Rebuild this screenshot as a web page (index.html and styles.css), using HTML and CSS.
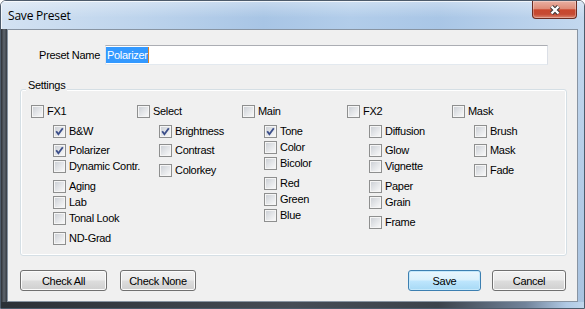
FILE: index.html
```html
<!doctype html>
<html lang="en">
<head>
	<title>Save Preset</title>
	<meta charset="UTF-8">
	<link rel="stylesheet" href="styles.css">
</head>
<body>

<div class="window">

	<div class="titlebar">
		<span class="title">Save Preset</span>
		<span class="close">
			<svg width="14" height="12" viewBox="0 0 14 12">
				<path d="M3.5 2.5 L10.5 9.5 M10.5 2.5 L3.5 9.5" stroke="#3b3b3b" stroke-width="4.4" fill="none"/>
				<path d="M3.5 2.5 L10.5 9.5 M10.5 2.5 L3.5 9.5" stroke="#ffffff" stroke-width="2.4" fill="none"/>
			</svg>
		</span>
	</div>

	<div class="frame-mid">
		<div class="frame-left"></div>

		<div class="client">

			<div class="name-row">
				<label class="name-label">Preset Name</label>
				<div class="textbox"><span class="sel">Polarizer</span><span class="caret"></span></div>
			</div>

			<div class="group">
				<div class="group-title">Settings</div>

				<div class="cols">

					<!-- FX1 -->
					<div class="col">
						<div class="cb-row"><span class="cb"></span>FX1</div>
						<div class="sub">
							<div class="cb-row"><span class="cb"><svg viewBox="0 0 11 11"><path d="M2.2 5.2 L4.4 8.2 L8.8 2.2" class="tick"/></svg></span>B&amp;W</div>
							<div class="cb-row gap3"><span class="cb"><svg viewBox="0 0 11 11"><path d="M2.2 5.2 L4.4 8.2 L8.8 2.2" class="tick"/></svg></span>Polarizer</div>
							<div class="cb-row"><span class="cb"></span>Dynamic Contr.</div>
							<div class="cb-row gap4"><span class="cb"></span>Aging</div>
							<div class="cb-row"><span class="cb"></span>Lab</div>
							<div class="cb-row"><span class="cb"></span>Tonal Look</div>
							<div class="cb-row gap4"><span class="cb"></span>ND-Grad</div>
						</div>
					</div>

					<!-- Select -->
					<div class="col">
						<div class="cb-row"><span class="cb"></span>Select</div>
						<div class="sub">
							<div class="cb-row"><span class="cb"><svg viewBox="0 0 11 11"><path d="M2.2 5.2 L4.4 8.2 L8.8 2.2" class="tick"/></svg></span>Brightness</div>
							<div class="cb-row gap3"><span class="cb"></span>Contrast</div>
							<div class="cb-row gap4"><span class="cb"></span>Colorkey</div>
						</div>
					</div>

					<!-- Main -->
					<div class="col">
						<div class="cb-row"><span class="cb"></span>Main</div>
						<div class="sub">
							<div class="cb-row"><span class="cb"><svg viewBox="0 0 11 11"><path d="M2.2 5.2 L4.4 8.2 L8.8 2.2" class="tick"/></svg></span>Tone</div>
							<div class="cb-row"><span class="cb"></span>Color</div>
							<div class="cb-row"><span class="cb"></span>Bicolor</div>
							<div class="cb-row gap4"><span class="cb"></span>Red</div>
							<div class="cb-row"><span class="cb"></span>Green</div>
							<div class="cb-row"><span class="cb"></span>Blue</div>
						</div>
					</div>

					<!-- FX2 -->
					<div class="col">
						<div class="cb-row"><span class="cb"></span>FX2</div>
						<div class="sub">
							<div class="cb-row"><span class="cb"></span>Diffusion</div>
							<div class="cb-row gap3"><span class="cb"></span>Glow</div>
							<div class="cb-row"><span class="cb"></span>Vignette</div>
							<div class="cb-row gap4"><span class="cb"></span>Paper</div>
							<div class="cb-row"><span class="cb"></span>Grain</div>
							<div class="cb-row gap4"><span class="cb"></span>Frame</div>
						</div>
					</div>

					<!-- Mask -->
					<div class="col">
						<div class="cb-row"><span class="cb"></span>Mask</div>
						<div class="sub">
							<div class="cb-row"><span class="cb"></span>Brush</div>
							<div class="cb-row gap3"><span class="cb"></span>Mask</div>
							<div class="cb-row gap4"><span class="cb"></span>Fade</div>
						</div>
					</div>

				</div>
			</div>

			<div class="buttons">
				<span class="btn btn-all">Check All</span>
				<span class="btn btn-none">Check None</span>
				<span class="spacer"></span>
				<span class="btn btn-default">Save</span>
				<span class="btn btn-cancel">Cancel</span>
			</div>

		</div>

		<div class="frame-right"></div>
	</div>

	<div class="frame-bottom"></div>

</div>

</body>
</html>
```

FILE: styles.css
```css
body { margin: 0; background: #ffffff; }

.window { width: 585px; height: 309px; box-sizing: border-box; display: flex; flex-direction: column;
	border: 1px solid #4d5b6b; border-radius: 6px 6px 0 0; overflow: hidden;
	font-family: "Liberation Sans", Arial, sans-serif; font-size: 11px; letter-spacing: -0.3px; color: #000000; }

/* title bar */
.titlebar { height: 28px; flex: none; display: flex; align-items: center;
	background: linear-gradient(to bottom, rgba(255,255,255,0.35), rgba(255,255,255,0) 60%),
		linear-gradient(to right, #d3e2f2 0%, #bcd3ec 25%, #a8c5e5 45%, #b2cdea 60%, #a9c6e6 75%, #c3d8ef 100%);
	box-shadow: inset 1px 1px 0 rgba(255,255,255,0.7); }
.title { flex: 1; padding-left: 7px; font-family: "Open Sans", "Noto Sans", sans-serif; font-size: 12px; letter-spacing: -0.2px; color: #000000; margin-top: 1px; }
.close { align-self: flex-start; width: 45px; height: 18px; box-sizing: border-box; margin-right: 7px;
	display: flex; align-items: center; justify-content: center;
	border: 1px solid #6b2c22; border-top: none; border-radius: 0 0 4px 4px;
	background: linear-gradient(to bottom, #e9b0a2 0%, #de8c78 45%, #c9472e 52%, #c54a33 78%, #dc8670 100%);
	box-shadow: inset 0 0 0 1px rgba(255,255,255,0.3); }
.close svg { display: block; }

/* side frames */
.frame-mid { flex: 1; display: flex; }
.frame-left { width: 6px; flex: none; background: linear-gradient(to right, #2c3036, #5e656d 50%, #363c43); }
.frame-right { width: 6px; flex: none; background: linear-gradient(to bottom, #c3d8ee, #b3cbe6 60%, #a9c3e0); }
.frame-bottom { height: 6px; flex: none;
	background: linear-gradient(to right, #2b3036 0%, #454c55 50%, #3c434b 75%, #71839a 90%, #b0c9e4 97%, #c0d6ec 100%); }

/* client area */
.client { flex: 1; display: flex; flex-direction: column; background: #f0f0f0; border: 1px solid #8894a2; }

.name-row { display: flex; align-items: center; padding: 15px 29px 0 0; }
.name-label { width: 97px; text-align: right; padding-right: 5px; box-sizing: border-box; }
.textbox { flex: 1; height: 20px; box-sizing: border-box; display: flex; align-items: center; background: #ffffff;
	border: 1px solid; border-color: #abadb3 #dbdfe6 #e3e9ef #e2e3ea; }
.sel { background: #3399ff; color: #ffffff; line-height: 16px; padding: 0 1px 0 1px; }
.caret { width: 1px; height: 16px; background: #d9822b; margin-left: -1px; }

/* group box */
.group { margin: 24px 10px 0 12px; height: 167px; box-sizing: border-box; padding: 0 0 0 10px;
	border: 1px solid #d5dfe5; border-radius: 3px; box-shadow: inset 0 0 0 1px #ffffff; }
.group-title { width: max-content; line-height: 13px; margin: -11px 0 0 -5px; padding: 0 2px; background: #f0f0f0; }

.cols { display: grid; grid-template-columns: 106px 105px 105px 105px 1fr; margin-top: 11px; }
.sub { margin: 4px 0 0 22px; }
.cb-row { height: 16px; display: flex; align-items: center; white-space: nowrap; }
.gap3 { margin-top: 3px; }
.gap4 { margin-top: 4px; }

.cb { width: 13px; height: 13px; box-sizing: border-box; flex: none; margin-right: 3px;
	border: 1px solid #8e8f8f;
	background: linear-gradient(135deg, #c9cdd3 0%, #e3e5e8 50%, #fbfbfb 100%);
	box-shadow: inset 0 0 0 1px #f5f5f5; }
.cb svg { display: block; width: 11px; height: 11px; }
.tick { fill: none; stroke: #3c4f8a; stroke-width: 1.9; }

/* buttons */
.buttons { display: flex; height: 21px; margin-top: 14px; padding: 0 11px 0 12px; }
.spacer { flex: 1; }
.btn { height: 21px; box-sizing: border-box; display: flex; align-items: center; justify-content: center;
	border: 1px solid #707070; border-radius: 3px;
	background: linear-gradient(to bottom, #f2f2f2 0%, #ebebeb 48%, #dddddd 52%, #cfcfcf 100%);
	box-shadow: inset 0 0 0 1px #fbfbfb; }
.btn-all { width: 87px; }
.btn-none { width: 76px; margin-left: 13px; }
.btn-default { width: 73px; border-color: #3c7fb1;
	background: linear-gradient(to bottom, #eaf6fd 0%, #d9f0fc 48%, #bee6fd 52%, #a7d9f5 100%);
	box-shadow: inset 0 0 0 1px #c4e8fb; }
.btn-cancel { width: 74px; margin-left: 11px; }
```
